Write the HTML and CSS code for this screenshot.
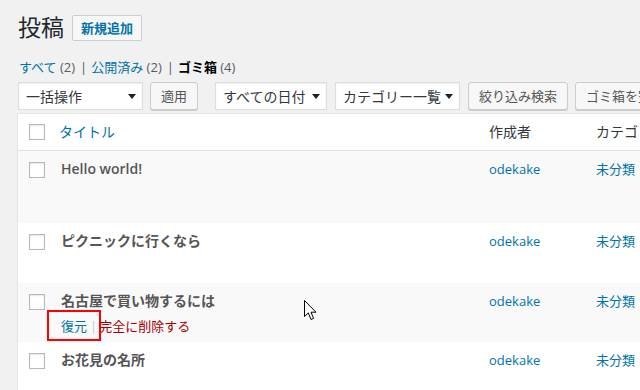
FILE: index.html
```html
<!DOCTYPE html>
<html lang="ja">
<head>
<meta charset="utf-8">
<title>投稿</title>
<link rel="stylesheet" href="styles.css">
</head>
<body>
<div class="wrap">
  <div class="head">
    <h1 class="page-title">投稿</h1>
    <a class="add-new">新規追加</a>
  </div>
  <ul class="views">
    <li><a class="view-link">すべて <span class="count">(2)</span></a><span class="sep">|</span></li>
    <li><a class="view-link">公開済み <span class="count">(2)</span></a><span class="sep">|</span></li>
    <li><a class="view-link current">ゴミ箱 <span class="count">(4)</span></a></li>
  </ul>
  <div class="filters">
    <div class="select w-bulk"><span>一括操作</span><svg class="caret" width="8" height="5" viewBox="0 0 8 5"><path d="M0 0H8L4 5Z" fill="#222"/></svg></div>
    <button class="btn">適用</button>
    <div class="select w-date group2"><span>すべての日付</span><svg class="caret" width="8" height="5" viewBox="0 0 8 5"><path d="M0 0H8L4 5Z" fill="#222"/></svg></div>
    <div class="select w-cat"><span>カテゴリー一覧</span><svg class="caret" width="8" height="5" viewBox="0 0 8 5"><path d="M0 0H8L4 5Z" fill="#222"/></svg></div>
    <button class="btn">絞り込み検索</button>
    <button class="btn">ゴミ箱を空にする</button>
  </div>
  <div class="table">
    <div class="row head-row">
      <div class="cell check"><span class="checkbox"></span></div>
      <div class="cell col-title"><a class="sort-link">タイトル</a></div>
      <div class="cell col-author">作成者</div>
      <div class="cell col-cat">カテゴリー</div>
    </div>
    <div class="row alt tall">
      <div class="cell check"><span class="checkbox"></span></div>
      <div class="cell col-title"><div class="post-title">Hello world!</div></div>
      <div class="cell col-author"><a class="link">odekake</a></div>
      <div class="cell col-cat"><a class="link">未分類</a></div>
    </div>
    <div class="row">
      <div class="cell check"><span class="checkbox"></span></div>
      <div class="cell col-title"><div class="post-title">ピクニックに行くなら</div></div>
      <div class="cell col-author"><a class="link">odekake</a></div>
      <div class="cell col-cat"><a class="link">未分類</a></div>
    </div>
    <div class="row alt short">
      <div class="cell check"><span class="checkbox"></span></div>
      <div class="cell col-title">
        <div class="post-title">名古屋で買い物するには</div>
        <div class="row-actions"><a class="link">復元</a><span class="bar">|</span><a class="delete">完全に削除する</a></div>
      </div>
      <div class="cell col-author"><a class="link">odekake</a></div>
      <div class="cell col-cat"><a class="link">未分類</a></div>
    </div>
    <div class="row">
      <div class="cell check"><span class="checkbox"></span></div>
      <div class="cell col-title"><div class="post-title">お花見の名所</div></div>
      <div class="cell col-author"><a class="link">odekake</a></div>
      <div class="cell col-cat"><a class="link">未分類</a></div>
    </div>
  </div>
</div>
<div class="highlight"></div>
<svg class="cursor" width="13" height="21" viewBox="0 0 13 21"><path d="M0.5 0.5V16.5L4.3 12.9L7 19.5L9.6 18.4L7 12.2H12Z" fill="#fff" stroke="#000" stroke-width="1" stroke-linejoin="miter"/></svg>
</body>
</html>
```

FILE: styles.css
```css
html, body {
  margin: 0;
  padding: 0;
  overflow: hidden;
  background: #f1f1f1;
  height: 100%;
}
body {
  font-family: "Open Sans", "Noto Sans CJK JP", sans-serif;
  font-size: 13px;
  color: #444;
  position: relative;
}
.wrap {
  padding-left: 18px;
  width: 720px;
}
.head {
  display: flex;
  align-items: center;
  margin-top: 14px;
  height: 27px;
}
.page-title {
  margin: 0;
  font-size: 23px;
  font-weight: 400;
  line-height: 27px;
  color: #23282d;
}
.add-new {
  margin-left: 8px;
  height: 26px;
  box-sizing: border-box;
  border: 1px solid #ccc;
  border-radius: 2px;
  background: #f7f7f7;
  color: #0073aa;
  font-weight: 700;
  font-size: 13px;
  line-height: 24px;
  padding: 0 8px;
}
.views {
  list-style: none;
  margin: 17px 0 0 1px;
  padding: 0;
  display: flex;
  height: 18px;
  line-height: 18px;
  font-size: 13px;
}
.view-link {
  color: #0073aa;
}
.view-link.current {
  color: #000;
  font-weight: 700;
}
.count {
  color: #555d66;
  font-weight: 400;
}
.sep {
  color: #555;
  margin: 0 4px 0 5px;
}
.filters {
  display: flex;
  align-items: flex-start;
  margin-top: 6px;
  height: 28px;
  white-space: nowrap;
  gap: 8px;
}
.select {
  box-sizing: border-box;
  height: 28px;
  background: #fff;
  border: 1px solid #ddd;
  box-shadow: inset 0 1px 2px rgba(0,0,0,.07);
  display: flex;
  align-items: center;
  justify-content: space-between;
  padding: 0 5px 0 7px;
  font-size: 14px;
  color: #32373c;
}
.caret {
  display: block;
  margin-right: 1px;
}
.w-bulk { width: 125px; margin-right: -1px; }
.w-date { width: 112px; }
.w-cat { width: 125px; }
.group2 { margin-left: 9px; }
.btn {
  box-sizing: border-box;
  height: 28px;
  margin: 0;
  padding: 0 10px 1px;
  border: 1px solid #ccc;
  border-radius: 3px;
  background: #f7f7f7;
  box-shadow: 0 1px 0 #ccc;
  color: #555;
  font-family: "Open Sans", "Noto Sans CJK JP", sans-serif;
  font-size: 13px;
  line-height: 26px;
}
.btn:last-child { margin-left: -1px; }
.table {
  margin-top: 3px;
  margin-left: -1px;
  background: #fff;
  border: 1px solid #e5e5e5;
  box-shadow: 0 1px 1px rgba(0,0,0,.04);
  width: 700px;
}
.row {
  display: grid;
  grid-template-columns: 33px 428px 107px 1fr;
  height: 60px;
  background: #fff;
}
.row.alt { background: #f9f9f9; }
.row.tall { height: 72px; }
.row.short { height: 59px; }
.head-row {
  height: 36px;
  border-bottom: 1px solid #e1e1e1;
}
.cell {
  padding: 8px 10px 0;
  line-height: 20px;
}
.check {
  padding: 11px 0 0 11px;
}
.head-row .check {
  padding-top: 10px;
}
.head-row .cell:not(.check) {
  padding-top: 8px;
  font-size: 14px;
  color: #32373c;
}
.head-row .col-title {
  padding-left: 8px;
}
.checkbox {
  display: block;
  box-sizing: border-box;
  width: 16px;
  height: 16px;
  border: 1px solid #b4b9be;
  background: #fff;
  box-shadow: inset 0 1px 2px rgba(0,0,0,.1);
}
.sort-link {
  color: #0073aa;
}
.post-title {
  font-size: 14px;
  font-weight: 600;
  color: #555;
}
.link {
  color: #0073aa;
}
.row-actions {
  margin-top: 5px;
  font-size: 13px;
}
.bar {
  color: #ccc;
  margin: 0 2px 0 3px;
}
.delete {
  color: #a00;
}
.highlight {
  position: absolute;
  left: 47px;
  top: 310px;
  width: 54px;
  height: 31px;
  box-sizing: border-box;
  border: 2px solid #f00;
}
.cursor {
  position: absolute;
  left: 304px;
  top: 300px;
}
```
